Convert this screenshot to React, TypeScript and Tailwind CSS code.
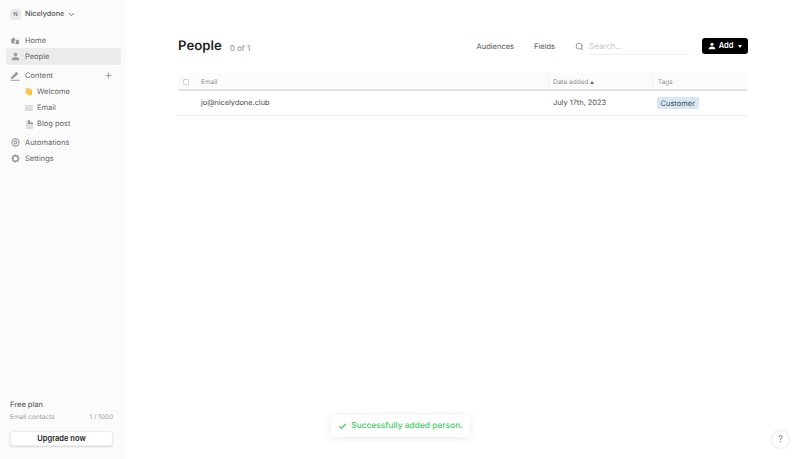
import { Check, ChevronDown, Plus, Search } from "lucide-react";
import type { ReactNode } from "react";

function HomeIcon() {
  return (
    <svg viewBox="0 0 12 12" className="h-[10px] w-[10px] fill-[#9a9a9a]">
      <path d="M0.5 5 L4 1.5 L6.5 4 L6.5 5.5 L5.5 5.5 L5.5 9 L1.5 9 L1.5 5.5 Z" />
      <path d="M7 5.5 L9 4 L11.5 6.5 L10.8 7 L10.8 10 L6.5 10 L6.5 8 L7 8 Z" />
    </svg>
  );
}

function PersonIcon({ className }: { className: string }) {
  return (
    <svg viewBox="0 0 12 12" className={className}>
      <circle cx="6" cy="3.4" r="2.4" />
      <path d="M1 11 C1 8 3 6.8 6 6.8 C9 6.8 11 8 11 11 Z" />
    </svg>
  );
}

function PenIcon() {
  return (
    <svg viewBox="0 0 12 12" className="h-[10px] w-[10px] fill-[#9a9a9a]">
      <path d="M1.5 7.5 L7.5 1 L10 3.2 L4 9 L1 9.5 Z" />
      <rect x="0.5" y="10.5" width="11" height="1.2" />
    </svg>
  );
}

function EyeIcon() {
  return (
    <svg viewBox="0 0 12 12" className="h-[9px] w-[9px] fill-none stroke-[#9a9a9a]">
      <circle cx="6" cy="6" r="4.8" strokeWidth="1.5" />
      <circle cx="6" cy="6" r="1.9" strokeWidth="1.5" />
    </svg>
  );
}

function GearIcon() {
  return (
    <svg viewBox="0 0 12 12" className="h-[9px] w-[9px]">
      <circle cx="6" cy="6" r="3.6" fill="none" stroke="#9a9a9a" strokeWidth="2" />
      <path
        d="M6 0.4 V2.5 M6 9.5 V11.6 M0.4 6 H2.5 M9.5 6 H11.6 M2 2 L3.4 3.4 M8.6 8.6 L10 10 M2 10 L3.4 8.6 M8.6 3.4 L10 2"
        stroke="#9a9a9a"
        strokeWidth="1.6"
      />
    </svg>
  );
}

function NavRow({ icon, label, active }: { icon: ReactNode; label: string; active?: boolean }) {
  return (
    <div
      className={`flex h-[17px] items-center gap-[5px] rounded-[3px] px-[4px] text-[7.5px] text-[#666666] ${
        active ? "bg-[#ececec]" : ""
      }`}
    >
      <span className="flex w-[10px] justify-center">{icon}</span>
      <span>{label}</span>
    </div>
  );
}

function SubRow({ icon, label }: { icon: ReactNode; label: string }) {
  return (
    <div className="flex h-[16px] items-center gap-[3px] pl-[18px] text-[7.5px] text-[#666666]">
      <span className="flex w-[10px] justify-center">{icon}</span>
      <span>{label}</span>
    </div>
  );
}

function Sidebar() {
  return (
    <aside className="flex h-full w-[127px] shrink-0 flex-col bg-[#fbfbfb] pb-[12px]">
      <div className="mt-[8px] flex h-[12px] items-center gap-[3px] pl-[10px]">
        <div className="flex h-[11px] w-[11px] items-center justify-center rounded-[3px] bg-[#ebebeb] text-[6px] font-semibold text-[#777]">
          N
        </div>
        <span className="ml-[1px] text-[7.3px] font-medium text-[#555555]">Nicelydone</span>
        <ChevronDown className="h-[9px] w-[9px] text-[#555]" strokeWidth={2.2} />
      </div>

      <nav className="mt-[12px] flex flex-col px-[6px]">
        <NavRow icon={<HomeIcon />} label="Home" />
        <div className="mt-[-1px]">
          <NavRow icon={<PersonIcon className="h-[9px] w-[9px] fill-[#9a9a9a]" />} label="People" active />
        </div>
        <div className="mt-[2px] flex h-[17px] items-center justify-between pr-[8px]">
          <div className="flex-1">
            <NavRow icon={<PenIcon />} label="Content" />
          </div>
          <Plus className="h-[9px] w-[9px] text-[#777]" strokeWidth={1.8} />
        </div>
        <SubRow icon={<span className="text-[7.5px] leading-none">👋</span>} label="Welcome" />
        <SubRow
          icon={
            <svg viewBox="0 0 12 9" className="h-[6px] w-[8px]">
              <rect width="12" height="9" fill="#dcdcdc" />
              <path d="M0 1 L6 5 L12 1" fill="none" stroke="#f5f5f5" strokeWidth="1" />
            </svg>
          }
          label="Email"
        />
        <SubRow
          icon={
            <svg viewBox="0 0 8 10" className="h-[9px] w-[7px]">
              <path d="M0 0 H5 L8 3 V10 H0 Z" fill="#dedede" />
              <path d="M2.5 0 H4.5 V3 H8 V4.5 H2.5 Z" fill="#8f8f8f" />
            </svg>
          }
          label="Blog post"
        />
        <div className="mt-[2px]">
          <NavRow icon={<EyeIcon />} label="Automations" />
        </div>
        <div className="mt-[-1px]">
          <NavRow icon={<GearIcon />} label="Settings" />
        </div>
      </nav>

      <div className="mt-auto px-[10px] pr-[14px]">
        <div className="text-[7.5px] font-medium text-[#666666]">Free plan</div>
        <div className="mt-[3px] flex justify-between text-[6.5px] text-[#a0a0a0]">
          <span>Email contacts</span>
          <span>1 / 1000</span>
        </div>
        <button className="mt-[3px] h-[15px] w-full rounded-[3px] border border-[#efefef] bg-white text-[7.5px] font-semibold text-[#222] shadow-[0_1px_2px_rgba(0,0,0,0.15)]">
          Upgrade now
        </button>
      </div>
    </aside>
  );
}

function PeopleTable() {
  return (
    <div className="mr-[1px] mt-[18px]">
      <div className="flex h-[18px] items-center border-b-2 border-[#e2e2e2] bg-[#fbfbfb] pt-[1px] text-[6.5px] text-[#8f8f8f]">
        <div className="flex w-[370px] items-center pl-[5px]">
          <span className="h-[6px] w-[6px] rounded-[1px] border border-[#d4d4d4] bg-white" />
          <span className="ml-[12px] mt-[2px]">Email</span>
        </div>
        <div className="flex h-full w-[104px] items-center border-l border-[#f0f0f0] pl-[4px] pt-[2px]">
          Date added
          <span className="ml-[2px] h-0 w-0 border-x-[2.5px] border-b-[3px] border-x-transparent border-b-[#666]" />
        </div>
        <div className="flex h-full flex-1 items-center border-l border-[#f0f0f0] pl-[5px] pt-[2px]">Tags</div>
      </div>
      <div className="flex h-[25px] items-center border-b border-[#ececec] text-[7.4px] text-[#4a4a4a]">
        <div className="w-[370px] pl-[23px]">jo@nicelydone.club</div>
        <div className="w-[104px] pl-[5px]">July 17th, 2023</div>
        <div className="flex-1 pl-[5px]">
          <span className="rounded-[2px] bg-[#d8e8f3] px-[3.5px] py-[1.5px] text-[7.5px] text-[#3f4f5c]">Customer</span>
        </div>
      </div>
    </div>
  );
}

export default function App() {
  return (
    <div className="relative flex h-[459px] w-[800px] overflow-hidden bg-white font-['Inter',sans-serif] [text-rendering:geometricPrecision]">
      <Sidebar />

      <main className="flex-1 pl-[51px] pr-[52px] pt-[37px]">
        <header className="flex h-[18px] items-center">
          <h1 className="mt-[1px] text-[13.2px] font-semibold leading-none text-[#1f1f1f]">People</h1>
          <span className="ml-[8px] mt-[3px] text-[8px] text-[#8a8a8a]">0 of 1</span>
          <div className="ml-auto flex items-center text-[7.5px] text-[#555]">
            <span className="mt-[1px]">Audiences</span>
            <span className="ml-[20px] mt-[1px]">Fields</span>
            <Search className="ml-[20px] h-[9px] w-[9px] text-[#777]" strokeWidth={2} />
            <div className="ml-[5px] flex h-[17px] w-[100px] items-center border-b border-[#eeeeee] text-[8px] text-[#c4c4c4]">
              Search...
            </div>
            <button className="ml-[13px] flex h-[16px] w-[46px] items-center justify-center rounded-[3px] bg-black text-[7.5px] font-semibold text-white">
              <PersonIcon className="h-[8px] w-[8px] fill-white" />
              <span className="ml-[3px]">Add</span>
              <span className="ml-[5px] h-0 w-0 border-x-[2.5px] border-t-[3px] border-x-transparent border-t-white" />
            </button>
          </div>
        </header>
        <PeopleTable />
      </main>

      <div className="absolute left-[331px] top-[415px] flex h-[22px] w-[139px] items-center justify-center whitespace-nowrap rounded-[5px] bg-white text-[8.4px] font-medium text-[#3ccb64] shadow-[0_1px_8px_rgba(0,0,0,0.1)]">
        <Check className="mr-[4px] h-[9px] w-[9px]" strokeWidth={3} />
        Successfully added person.
      </div>

      <div className="absolute left-[772px] top-[431px] flex h-[17px] w-[17px] items-center justify-center rounded-full bg-white text-[9px] text-[#777] shadow-[0_0_3px_rgba(0,0,0,0.2)]">
        ?
      </div>
    </div>
  );
}
